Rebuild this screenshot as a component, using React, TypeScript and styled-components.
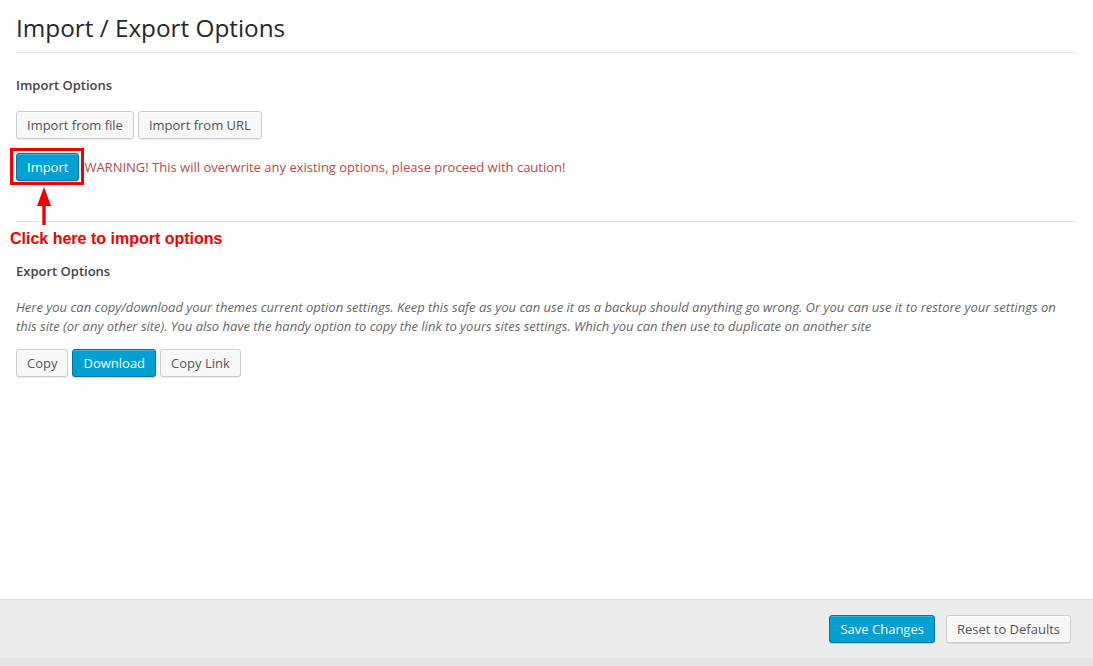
import styled, { createGlobalStyle } from 'styled-components';

const GlobalStyle = createGlobalStyle`
  html, body {
    margin: 0;
    padding: 0;
    background: #fff;
  }
  body {
    font-family: 'Open Sans', 'Noto Sans', sans-serif;
    font-size: 13px;
    color: #444;
  }
  * {
    box-sizing: border-box;
  }
`;

const Page = styled.div`
  display: flex;
  flex-direction: column;
  min-height: 100vh;
`;

const Main = styled.main`
  flex: 1;
  padding: 0 17px 0 16px;
`;

const Title = styled.h2`
  margin: 0;
  padding: 13px 0 10px;
  font-size: 24.3px;
  line-height: 29px;
  font-weight: 400;
  color: #23282d;
  border-bottom: 1px solid #e5e5e5;
`;

const Section = styled.section<{ $top: number }>`
  padding-top: ${(p) => p.$top}px;
`;

const Heading = styled.h3`
  margin: 0;
  font-size: 13px;
  line-height: 18px;
  font-weight: 600;
  color: #444;
`;

const ButtonRow = styled.div<{ $top: number }>`
  display: flex;
  align-items: center;
  gap: 4px;
  margin-top: ${(p) => p.$top}px;
`;

const Button = styled.button<{ $primary?: boolean }>`
  height: 28px;
  margin: 0;
  padding: 0 10px 1px;
  font-family: 'Open Sans', 'Noto Sans', sans-serif;
  font-size: 13px;
  line-height: 26px;
  white-space: nowrap;
  border-radius: 3px;
  cursor: pointer;
  border: 1px solid ${(p) => (p.$primary ? '#0073aa' : '#cccccc')};
  background: ${(p) => (p.$primary ? '#00a0d2' : '#f7f7f7')};
  color: ${(p) => (p.$primary ? '#ffffff' : '#555555')};
  box-shadow: ${(p) =>
    p.$primary
      ? 'inset 0 1px 0 rgba(120, 200, 230, 0.5), 0 1px 0 rgba(0, 0, 0, 0.15)'
      : 'inset 0 1px 0 #fff, 0 1px 0 rgba(0, 0, 0, 0.08)'};
`;

// red box drawn round the import button
const Marker = styled.span`
  position: relative;
  display: inline-flex;

  &::before {
    content: '';
    position: absolute;
    left: -6px;
    top: -5px;
    right: -5px;
    bottom: -4px;
    border: 3px solid #f00000;
    pointer-events: none;
  }
`;

const Arrow = styled.svg`
  position: absolute;
  left: 21px;
  top: 34px;
  overflow: visible;
`;

const Warning = styled.span`
  color: #b94a48;
  font-size: 13px;
  line-height: 18px;
  margin-left: 1px;
`;

const Divider = styled.hr`
  margin: 40px 0 0;
  border: 0;
  border-top: 1px solid #e5e5e5;
`;

const Callout = styled.div`
  margin: 8px 0 0 -6px;
  font-family: 'Liberation Sans', Arial, sans-serif;
  font-weight: 700;
  font-size: 16px;
  line-height: 18px;
  color: #f00000;
`;

const Description = styled.p`
  margin: 18px 0 0;
  font-style: italic;
  font-size: 13px;
  line-height: 19px;
  color: #666;
`;

const Footer = styled.footer`
  display: flex;
  justify-content: flex-end;
  gap: 11px;
  padding: 15px 22px 15px;
  background: #ececec;
  border-top: 1px solid #dcdcdc;
  border-bottom: 8px solid #e4e4e4;
`;

const App = () => {
  return (
    <Page>
      <GlobalStyle />
      <Main>
        <Title>Import / Export Options</Title>
        <Section $top={23}>
          <Heading>Import Options</Heading>
          <ButtonRow $top={17}>
            <Button>Import from file</Button>
            <Button>Import from URL</Button>
          </ButtonRow>
          <ButtonRow $top={14}>
            <Marker>
              <Button $primary>Import</Button>
              <Arrow width="14" height="38" viewBox="0 0 14 38">
                <polygon points="7,0 14,19 8.7,19 8.7,38 5.3,38 5.3,19 0,19" fill="#f00000" />
              </Arrow>
            </Marker>
            <Warning>WARNING! This will overwrite any existing options, please proceed with caution!</Warning>
          </ButtonRow>
        </Section>
        <Divider />
        <Callout>Click here to import options</Callout>
        <Section $top={14}>
          <Heading>Export Options</Heading>
          <Description>
            Here you can copy/download your themes current option settings. Keep this safe as you can use it as a
            backup should anything go wrong. Or you can use it to restore your settings on this site (or any other
            site). You also have the handy option to copy the link to yours sites settings. Which you can then use to
            duplicate on another site
          </Description>
          <ButtonRow $top={13}>
            <Button>Copy</Button>
            <Button $primary>Download</Button>
            <Button>Copy Link</Button>
          </ButtonRow>
        </Section>
      </Main>
      <Footer>
        <Button $primary>Save Changes</Button>
        <Button>Reset to Defaults</Button>
      </Footer>
    </Page>
  );
};

export default App;
